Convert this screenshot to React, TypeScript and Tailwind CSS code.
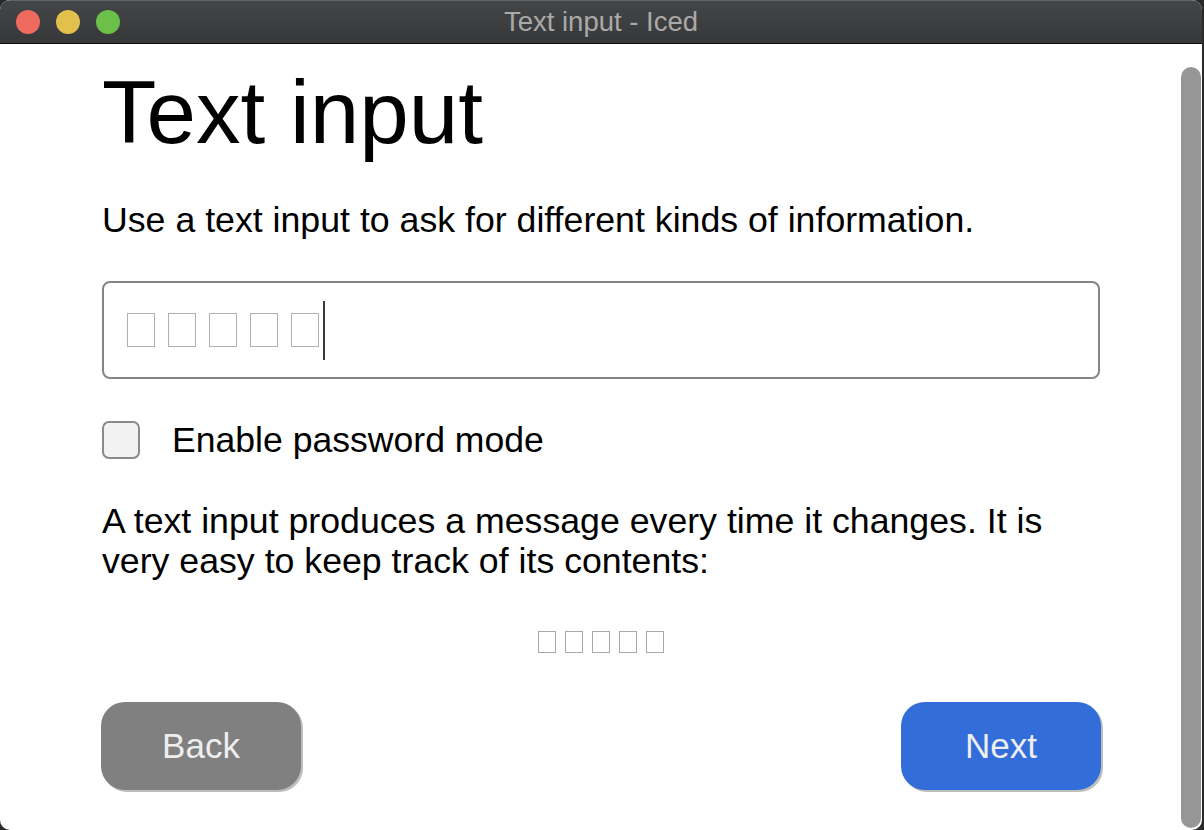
import React from "react";

const Tofu = ({ big }: { big?: boolean }) => (
  <span
    className={
      big
        ? "inline-block w-[28px] h-[34px] border-[1.5px] border-[#b0b0b0]"
        : "inline-block w-[18px] h-[22px] border-[1.5px] border-[#a8a8a8]"
    }
  />
);

const App = () => {
  return (
    <div className="w-[1204px] h-[830px] bg-[#2a2a2a] overflow-hidden font-['Liberation_Sans',Arial,sans-serif]">
      <div className="w-[1202px] h-[830px] flex flex-col rounded-[10px] overflow-hidden bg-white">
        {/* title bar */}
        <div className="h-[44px] shrink-0 relative flex items-center bg-gradient-to-b from-[#444547] to-[#37383a] border-t border-[#626366] border-b border-b-[#0c0c0c]">
          <div className="flex items-center gap-4 pl-4">
            <span className="w-6 h-6 rounded-full bg-[#ee6a5f]" />
            <span className="w-6 h-6 rounded-full bg-[#e2c04c]" />
            <span className="w-6 h-6 rounded-full bg-[#6cc04a]" />
          </div>
          <div className="absolute inset-0 flex items-center justify-center text-[27.5px] text-[#a9a9a9]">
            Text input - Iced
          </div>
        </div>

        {/* body */}
        <div className="flex-1 flex min-h-0">
          <div className="flex-1 pl-[102px] pr-[80px]">
            <div className="w-[998px] flex flex-col">
              <h1 className="mt-[24px] text-[89px] leading-[88px] text-black">Text input</h1>
              <p className="mt-[44px] text-[35.7px] leading-[40px] text-black">
                Use a text input to ask for different kinds of information.
              </p>
              <div className="mt-[41px] h-[98px] rounded-[8px] border-2 border-[#858585] flex items-center pl-[23px]">
                <div className="flex items-center gap-[13px]">
                  <Tofu big />
                  <Tofu big />
                  <Tofu big />
                  <Tofu big />
                  <Tofu big />
                </div>
                <span className="ml-[4px] w-[2px] h-[59px] bg-[#3a3a3a]" />
              </div>
              <label className="mt-[41px] h-[40px] flex items-center gap-[32px]">
                <span className="w-[38px] h-[38px] rounded-[7px] border-2 border-[#8a8a8a] bg-[#f2f2f2]" />
                <span className="text-[35.6px] leading-[40px] text-black">Enable password mode</span>
              </label>
              <p className="mt-[41px] text-[35.7px] leading-[40px] text-black">
                A text input produces a message every time it changes. It is very easy to keep track of its contents:
              </p>
              <div className="mt-[50px] h-[22px] flex justify-center gap-[9px]">
                <Tofu />
                <Tofu />
                <Tofu />
                <Tofu />
                <Tofu />
              </div>
              <div className="mt-[49px] flex justify-between">
                <button className="w-[200px] h-[88px] -ml-px rounded-[24px] bg-[#808080] text-[35px] text-[#eeeeee] shadow-[2px_2px_0_#bdbdbd]">
                  Back
                </button>
                <button className="w-[200px] h-[88px] -mr-px rounded-[24px] bg-[#326dd9] text-[35px] text-[#eeeeee] shadow-[2px_2px_0_#bdbdbd]">
                  Next
                </button>
              </div>
            </div>
          </div>
          <div className="w-[21px] shrink-0 pt-[23px] pb-[2px] pr-[1px]">
            <div className="w-[20px] h-full rounded-full bg-[#969696]" />
          </div>
        </div>
      </div>
    </div>
  );
};

export default App;
